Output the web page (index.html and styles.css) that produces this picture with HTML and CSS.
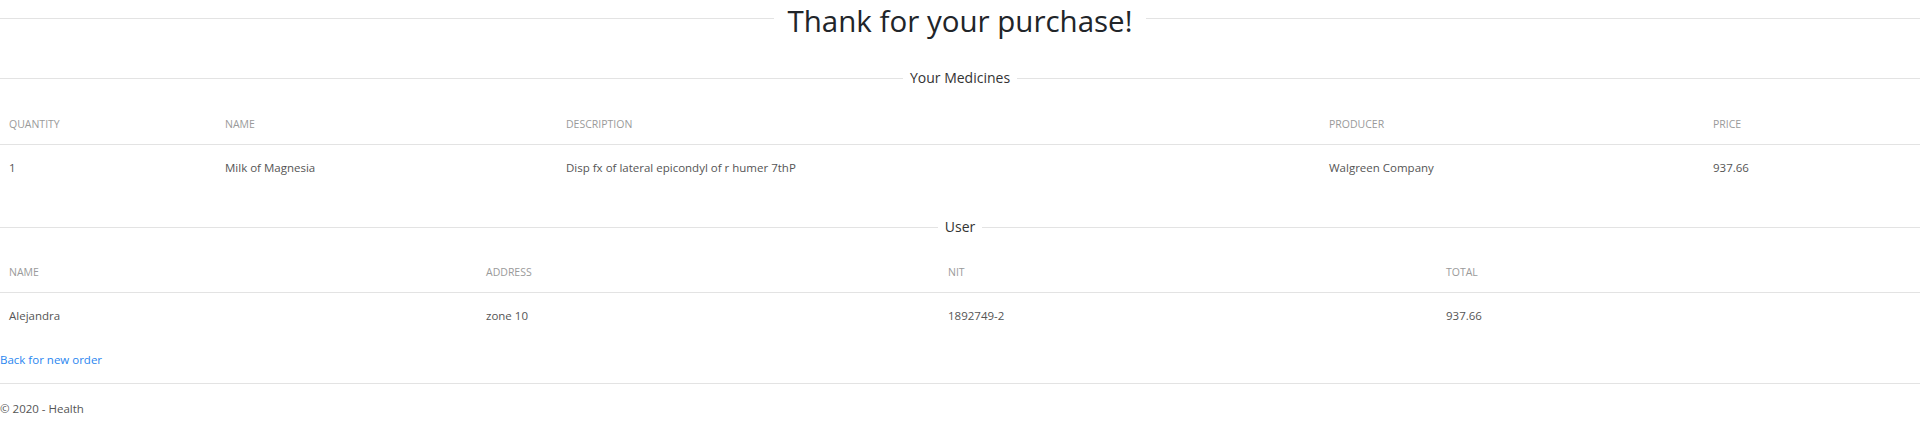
FILE: index.html
```html
<!DOCTYPE html>
<html lang="en">
<head>
<meta charset="utf-8">
<title>Health - Thank you</title>
<link rel="stylesheet" href="styles.css">
</head>
<body>
<main class="page">
  <div class="divider title-div"><h1 class="title">Thank for your purchase!</h1></div>

  <div class="divider sec-div meds-div"><h2 class="sec-title">Your Medicines</h2></div>
  <table class="tbl meds">
    <colgroup>
      <col class="c-qty"><col class="c-name"><col class="c-desc"><col class="c-prod"><col class="c-price">
    </colgroup>
    <thead>
      <tr><th>Quantity</th><th>Name</th><th>Description</th><th>Producer</th><th>Price</th></tr>
    </thead>
    <tbody>
      <tr><td>1</td><td>Milk of Magnesia</td><td>Disp fx of lateral epicondyl of r humer 7thP</td><td>Walgreen Company</td><td>937.66</td></tr>
    </tbody>
  </table>

  <div class="divider sec-div user-div"><h2 class="sec-title user-title">User</h2></div>
  <table class="tbl users">
    <colgroup>
      <col class="u-name"><col class="u-addr"><col class="u-nit"><col class="u-total">
    </colgroup>
    <thead>
      <tr><th>Name</th><th>Address</th><th>NIT</th><th>Total</th></tr>
    </thead>
    <tbody>
      <tr><td>Alejandra</td><td>zone 10</td><td>1892749-2</td><td>937.66</td></tr>
    </tbody>
  </table>

  <a class="back" href="#">Back for new order</a>
</main>
<footer class="footer">© 2020 - Health</footer>
</body>
</html>
```

FILE: styles.css
```css
html, body {
  margin: 0;
  padding: 0;
  background: #ffffff;
}
body {
  font-family: "Open Sans", "Noto Sans", sans-serif;
  font-size: 11.5px;
  color: #555555;
}
.page {
  display: flex;
  flex-direction: column;
}
.divider {
  display: flex;
  align-items: center;
}
.divider::before,
.divider::after {
  content: "";
  flex: 1;
  border-top: 1px solid #e3e3e3;
}
.title-div {
  align-items: flex-start;
}
.title-div::before,
.title-div::after {
  margin-top: 18px;
}
.title {
  margin: 0;
  padding: 0 14px;
  font-size: 29.5px;
  line-height: 41px;
  font-weight: 400;
  color: #212529;
}
.sec-div {
  height: 20px;
}
.meds-div {
  margin-top: 27px;
}
.user-div {
  margin-top: 28px;
}
.sec-title {
  margin: 0;
  padding: 0 7px;
  font-size: 14px;
  line-height: 20px;
  font-weight: 400;
  color: #333333;
}
.tbl {
  width: 100%;
  border-collapse: collapse;
  table-layout: fixed;
}
.meds { margin-top: 16px; }
.users { margin-top: 15px; }
.c-qty { width: 216px; }
.c-name { width: 341px; }
.c-desc { width: 763px; }
.c-prod { width: 384px; }
.c-price { width: 216px; }
.u-name { width: 477px; }
.u-addr { width: 462px; }
.u-nit { width: 498px; }
.u-total { width: 483px; }
.tbl th {
  height: 40px;
  padding: 0 9px;
  text-align: left;
  vertical-align: middle;
  font-size: 10.5px;
  font-weight: 400;
  text-transform: uppercase;
  color: #9a9a9a;
  border-bottom: 1px solid #e3e3e3;
}
.tbl td {
  height: 44px;
  padding: 0 9px;
  vertical-align: middle;
  color: #555555;
}
.back {
  display: block;
  margin-top: 14px;
  line-height: 18px;
  color: #2a86f0;
  text-decoration: none;
  align-self: flex-start;
}
.footer {
  margin-top: 14px;
  padding-top: 16px;
  border-top: 1px solid #e3e3e3;
  line-height: 18px;
  color: #555555;
}
```
